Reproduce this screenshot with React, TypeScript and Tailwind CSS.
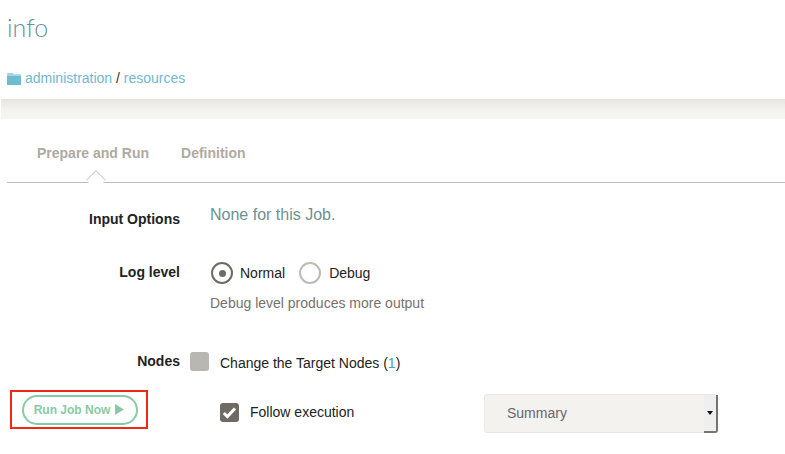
const sans = "font-['Liberation_Sans',Arial,sans-serif]"

function FolderIcon() {
  return (
    <svg width="14" height="13" viewBox="0 0 14 13" className="shrink-0">
      <path d="M1 1h5l1 1.2H14V3.6H0V2a1 1 0 0 1 1-1z" fill="#a5d3e2" />
      <rect x="0" y="3.6" width="14" height="9.4" fill="#70bbd2" />
    </svg>
  )
}

function Tabs() {
  return (
    <div className="relative ml-[7px] h-[64px] border-b border-[#bdbdbb]">
      <div className="flex gap-[32px] pl-[30px] pt-[26px] text-[14px] font-bold leading-4 text-[#aeaaa2]">
        <span>Prepare and Run</span>
        <span>Definition</span>
      </div>
      <div className="absolute left-[82px] top-[53.5px] h-[14px] w-[14px] rotate-45 border-l border-t border-[#cfcfcd] bg-white" />
    </div>
  )
}

export default function App() {
  return (
    <div className={`h-[454px] w-[785px] overflow-hidden bg-white ${sans}`}>
      <div className="h-[99px] pl-[7px]">
        <h1 className="pt-[11px] font-['Lato',sans-serif] text-[25px] font-light leading-8 text-[#6b9097]">info</h1>
        <div className="mt-[25px] flex items-center gap-[4px] text-[14px] leading-5 text-[#333]">
          <FolderIcon />
          <span>
            <span className="text-[#6fb9d0]">administration</span> / <span className="text-[#6fb9d0]">resources</span>
          </span>
        </div>
      </div>

      <div className="ml-px h-[20px] bg-gradient-to-b from-[#e6e4df] via-[#f3f2ee] to-[#f6f5f1]" />

      <Tabs />

      <div className="grid grid-cols-[180px_1fr] pt-[22px]">
        <div className="pt-[4px] text-right text-[14px] font-bold leading-5 text-[#222]">Input Options</div>
        <div className="pl-[30px] text-[16px] leading-5 text-[#6d9190]">None for this Job.</div>

        <div className="mt-[29px] pt-[4px] text-right text-[14px] font-bold leading-5 text-[#222]">Log level</div>
        <div className="mt-[29px] pl-[31px]">
          <div className="flex items-center pt-[4px] text-[14px] leading-5 text-[#222]">
            <span className="flex h-[22px] w-[22px] items-center justify-center rounded-full border-2 border-[#6f6a64] bg-white">
              <span className="h-[7px] w-[7px] rounded-full bg-[#6f6a64]" />
            </span>
            <span className="ml-[7px]">Normal</span>
            <span className="ml-[14px] h-[22px] w-[22px] rounded-full border-2 border-[#bdbbb6]" />
            <span className="ml-[8px]">Debug</span>
          </div>
          <p className="ml-[-1px] mt-[9px] text-[14px] leading-5 text-[#76726d]">Debug level produces more output</p>
        </div>

        <div className="mt-[38px] text-right text-[14px] font-bold leading-5 text-[#222]">Nodes</div>
        <div className="mt-[37px] flex items-center pl-[10px] text-[14px] leading-5 text-[#222]">
          <span className="h-[19px] w-[19px] rounded-[3px] bg-[#b9b7b2]" />
          <span className="ml-[11px] pt-[3px]">
            Change the Target Nodes (<span className="text-[#4d9dbb]">1</span>)
          </span>
        </div>
      </div>

      <div className="mt-[17px] flex items-start">
        <div className="ml-[10px] flex h-[39px] w-[138px] items-center border-2 border-[#f02a12] pl-[10px]">
          <button className="flex h-[30px] w-[116px] items-center justify-center gap-[5px] rounded-full border-2 border-[#86cba6] pr-[2px] text-[12px] font-bold text-[#86cba6]">
            Run Job Now
            <svg width="9" height="11" viewBox="0 0 9 11" className="shrink-0">
              <path d="M0 0l9 5.5L0 11z" fill="#86cba6" />
            </svg>
          </button>
        </div>
        <div className="ml-[72px] mt-[12px] flex w-[264px] items-center text-[14px] leading-5 text-[#222]">
          <span className="flex h-[19px] w-[19px] items-center justify-center rounded-[3px] bg-[#6f6a64]">
            <svg width="15" height="13" viewBox="0 0 15 13">
              <path d="M1.8 7l3.6 3.6L13 2.4" fill="none" stroke="#fff" strokeWidth="3" />
            </svg>
          </span>
          <span className="ml-[11px]">Follow execution</span>
        </div>
        <div className="relative mt-[4px] flex h-[39px] w-[234px] items-center rounded-[3px] border border-[#e9e8e4] bg-[#f3f2ef] pl-[22px] text-[14px] text-[#67676b]">
          Summary
          <div className="absolute -bottom-px -right-px top-0 flex w-[14px] items-center justify-center rounded-br-[3px] border-b-2 border-r-2 border-[#77736e] bg-[#efefef]">
            <span className="h-0 w-0 border-x-[3px] border-t-[4px] border-x-transparent border-t-[#111]" />
          </div>
        </div>
      </div>
    </div>
  )
}
